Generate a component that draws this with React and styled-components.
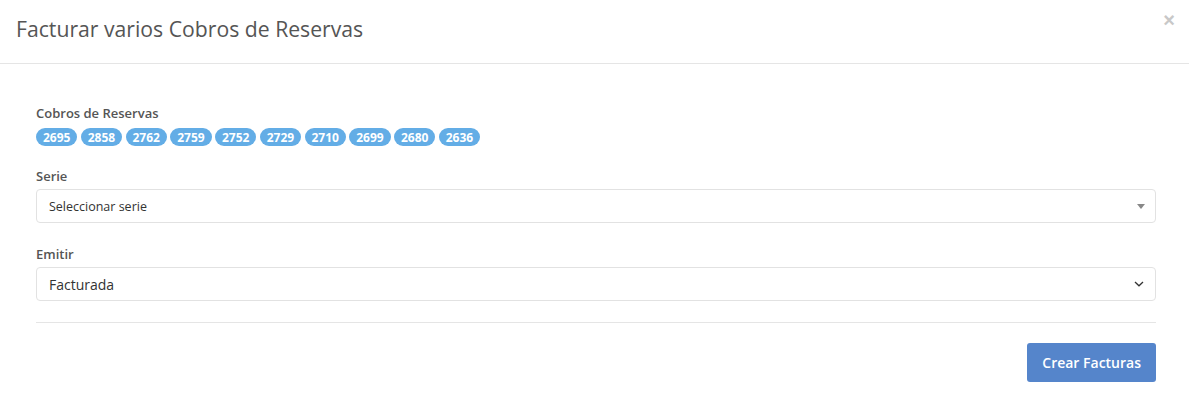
import React from "react";
import styled, { createGlobalStyle } from "styled-components";

const Global = createGlobalStyle`
  html, body { margin: 0; padding: 0; background: #fff; }
  body { font-family: "Open Sans", "Liberation Sans", sans-serif; color: #333; }
  * { box-sizing: border-box; }
`;

const Modal = styled.div`
  width: 1189px;
  background: #fff;
`;

const Header = styled.div`
  display: flex;
  justify-content: space-between;
  align-items: flex-start;
  padding: 12px 14px 18px 16px;
  border-bottom: 1px solid #e5e5e5;
`;

const Title = styled.h4`
  margin: 0;
  font-size: 21.2px;
  font-weight: 400;
  line-height: 33px;
  color: #555;
`;

const Close = styled.button`
  border: 0;
  background: none;
  padding: 0;
  font-family: "Liberation Sans", sans-serif;
  font-size: 20px;
  font-weight: 700;
  line-height: 16px;
  color: #c8c8c8;
  cursor: pointer;
`;

const Body = styled.div`
  padding: 40px 33px 20px 36px;
`;

const Group = styled.div`
  margin-bottom: ${(p) => p.$mb ?? 22}px;
`;

const Label = styled.div`
  font-size: 13px;
  font-weight: 600;
  line-height: 18px;
  color: #555;
  margin-bottom: ${(p) => p.$mb || 4}px;
`;

const Badges = styled.div`
  display: flex;
  flex-wrap: wrap;
  gap: 3.3px;
`;

const Badge = styled.span`
  display: inline-flex;
  align-items: center;
  justify-content: center;
  height: 18px;
  padding: 0 7px;
  border-radius: 9px;
  background: #63ade6;
  color: #fff;
  font-size: 12px;
  font-weight: 700;
`;

const SelectBox = styled.div`
  display: flex;
  align-items: center;
  justify-content: space-between;
  height: 34px;
  padding: 0 10px 0 12px;
  border: 1px solid #e2e2e2;
  border-radius: 4px;
  background: #fff;
  font-size: ${(p) => p.$fs || 13}px;
  color: #333;
`;

const Caret = styled.span`
  width: 0;
  height: 0;
  border-left: 4px solid transparent;
  border-right: 4px solid transparent;
  border-top: 5px solid #888;
`;

const Divider = styled.hr`
  border: 0;
  border-top: 1px solid #e5e5e5;
  margin: 21px 0 20px;
`;

const Footer = styled.div`
  display: flex;
  justify-content: flex-end;
`;

const Button = styled.button`
  height: 39px;
  padding: 0 15px;
  border: 0;
  border-radius: 3px;
  background: #5585cb;
  color: #fff;
  font-family: "Open Sans", "Liberation Sans", sans-serif;
  font-size: 14px;
  font-weight: 600;
  cursor: pointer;
`;

const ids = [2695, 2858, 2762, 2759, 2752, 2729, 2710, 2699, 2680, 2636];

export default function App() {
  return (
    <>
      <Global />
      <Modal>
        <Header>
          <Title>Facturar varios Cobros de Reservas</Title>
          <Close aria-label="close">×</Close>
        </Header>
        <Body>
          <Group $mb={21}>
            <Label $mb={6}>Cobros de Reservas</Label>
            <Badges>
              {ids.map((id) => (
                <Badge key={id}>{id}</Badge>
              ))}
            </Badges>
          </Group>
          <Group>
            <Label>Serie</Label>
            <SelectBox $fs={12.5}>
              <span>Seleccionar serie</span>
              <Caret />
            </SelectBox>
          </Group>
          <Group $mb={0}>
            <Label>Emitir</Label>
            <SelectBox $fs={14}>
              <span>Facturada</span>
              <svg width="12" height="8" viewBox="0 0 12 8">
                <path d="M2 2 L6 5.8 L10 2" fill="none" stroke="#333" strokeWidth="1.3" />
              </svg>
            </SelectBox>
          </Group>
          <Divider />
          <Footer>
            <Button>Crear Facturas</Button>
          </Footer>
        </Body>
      </Modal>
    </>
  );
}
